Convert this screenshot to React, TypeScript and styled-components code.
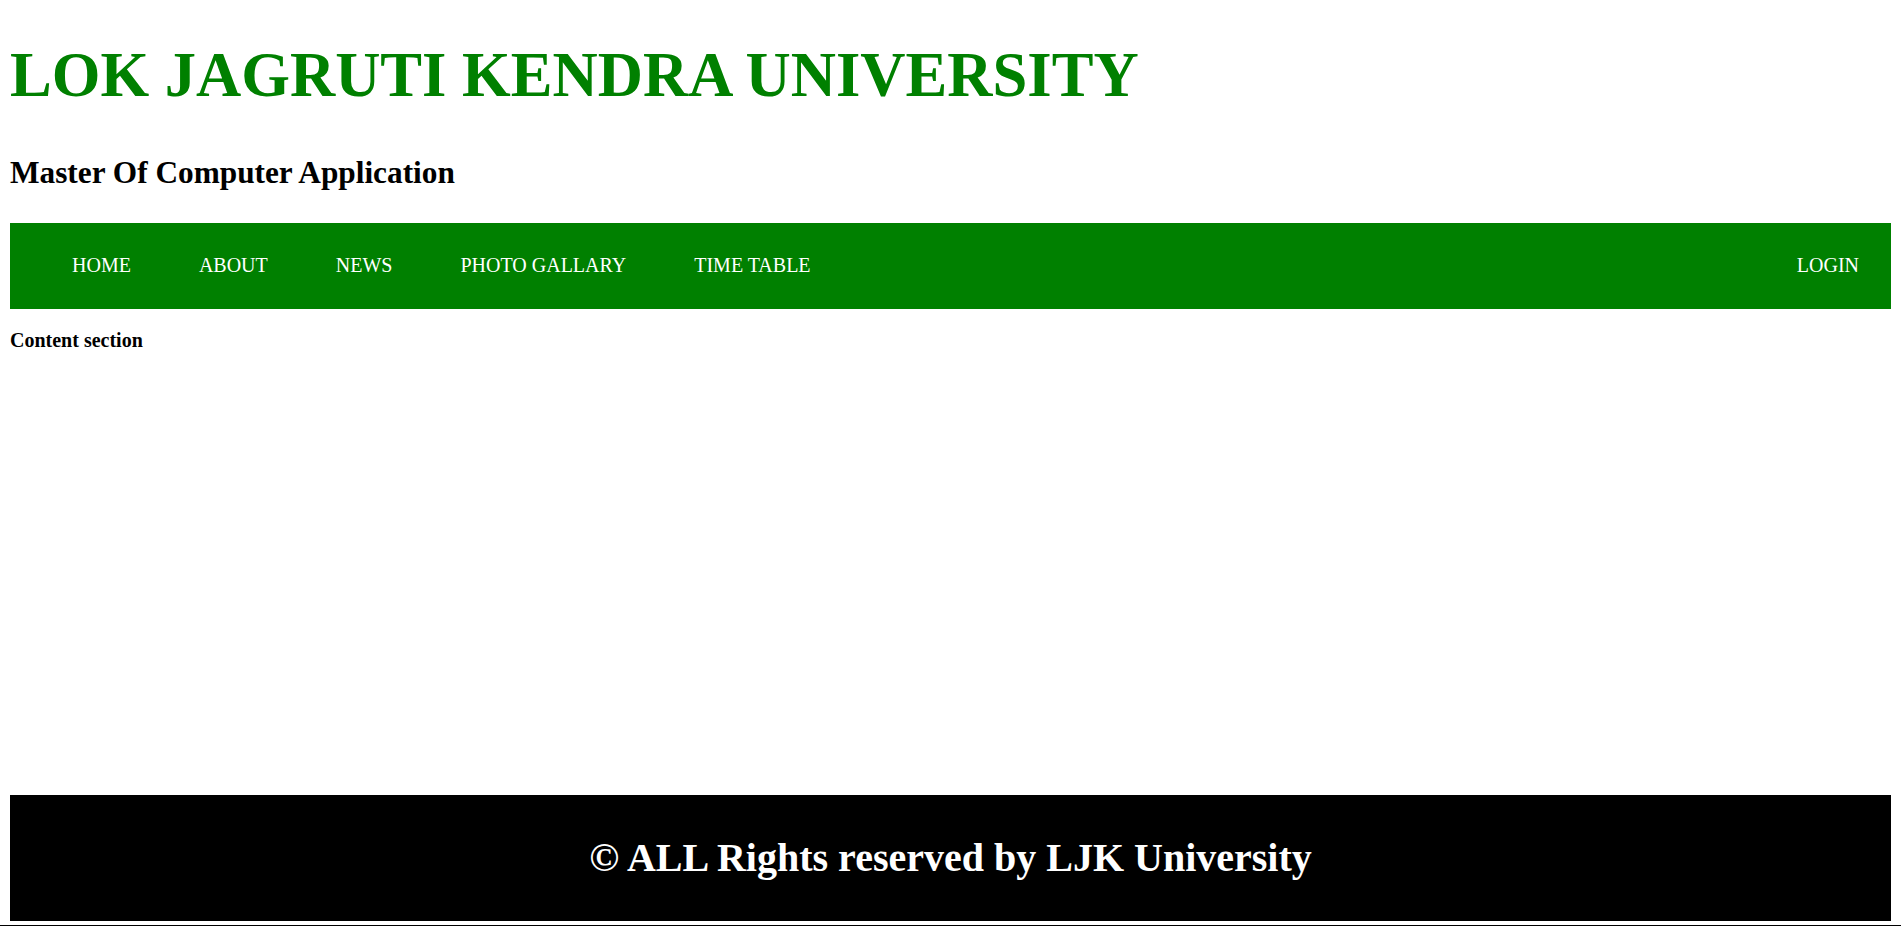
import React from "react";
import styled, { createGlobalStyle } from "styled-components";

const GlobalStyle = createGlobalStyle`
  html, body {
    margin: 0;
    padding: 0;
    background: #ffffff;
  }
  body {
    font-family: "Liberation Serif", "Times New Roman", serif;
    color: #000000;
  }
`;

const Page = styled.div`
  padding: 10px 10px 0;
  display: flex;
  flex-direction: column;
`;

const Header = styled.header`
  display: flex;
  flex-direction: column;
`;

const Title = styled.h1`
  margin: 30px 0 0;
  font-size: 62.6px;
  line-height: 71px;
  font-weight: bold;
  color: #008000;
`;

const Subtitle = styled.h2`
  margin: 43px 0 0;
  font-size: 31.3px;
  line-height: 37px;
  font-weight: bold;
`;

const Nav = styled.nav`
  margin-top: 32px;
  height: 86px;
  box-sizing: border-box;
  padding: 0 0 2px 28px;
  background: #008000;
  display: flex;
  align-items: center;
  justify-content: space-between;
`;

const NavList = styled.ul`
  list-style: none;
  margin: 0;
  padding: 0;
  display: flex;
  align-items: center;
`;

const NavLink = styled.a<{ $last?: boolean }>`
  display: block;
  padding: 0 ${(p) => (p.$last ? "32px" : "34px")} 0 34px;
  font-size: 20px;
  line-height: 23px;
  color: #ffffff;
  text-decoration: none;
  white-space: nowrap;
`;

const Main = styled.main`
  height: 486px;
  box-sizing: border-box;
  padding-top: 20px;
`;

const ContentLabel = styled.p`
  margin: 0;
  font-size: 20px;
  line-height: 23px;
  font-weight: bold;
`;

const Footer = styled.footer`
  height: 126px;
  background: #000000;
  display: flex;
  align-items: center;
  justify-content: center;
`;

const FooterText = styled.h2`
  margin: 0;
  font-size: 40px;
  line-height: 46px;
  font-weight: bold;
  color: #ffffff;
`;

const BottomRule = styled.div`
  margin: 4px -10px 0;
  height: 4px;
  background: #000000;
`;

const links = ["HOME", "ABOUT", "NEWS", "PHOTO GALLARY", "TIME TABLE"];

export default function App() {
  return (
    <>
      <GlobalStyle />
      <Page>
        <Header>
          <Title>LOK JAGRUTI KENDRA UNIVERSITY</Title>
          <Subtitle>Master Of Computer Application</Subtitle>
        </Header>
        <Nav>
          <NavList>
            {links.map((l) => (
              <li key={l}>
                <NavLink href="#">{l}</NavLink>
              </li>
            ))}
          </NavList>
          <NavList>
            <li>
              <NavLink href="#" $last>
                LOGIN
              </NavLink>
            </li>
          </NavList>
        </Nav>
        <Main>
          <ContentLabel>Content section</ContentLabel>
        </Main>
        <Footer>
          <FooterText>© ALL Rights reserved by LJK University</FooterText>
        </Footer>
        <BottomRule />
      </Page>
    </>
  );
}
